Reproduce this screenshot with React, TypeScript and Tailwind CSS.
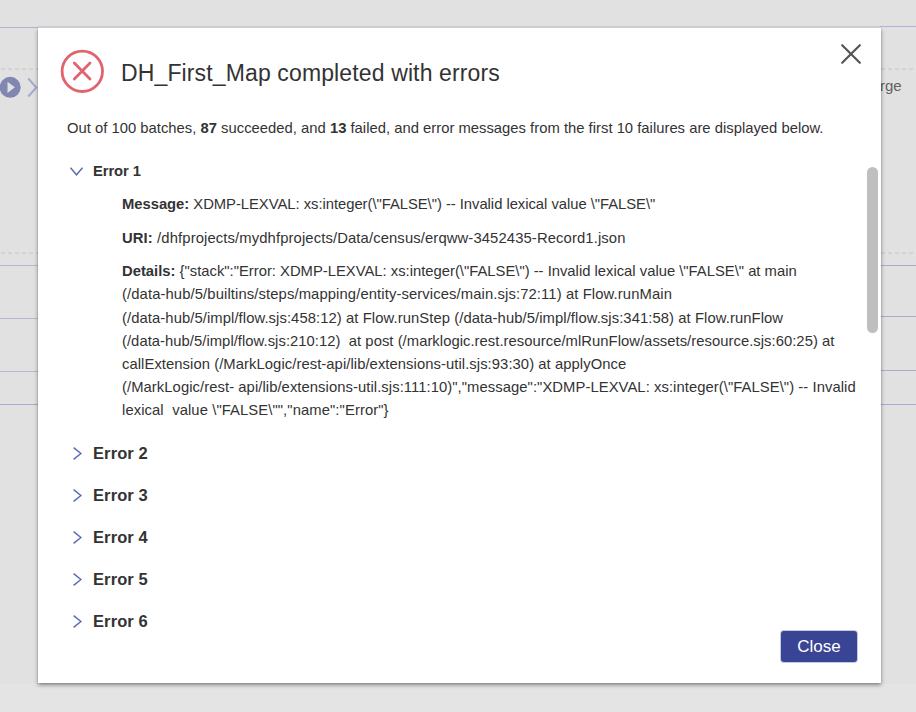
import type { ReactNode } from "react";

function Line({ children, className = "" }: { children: ReactNode; className?: string }) {
  return <div className={`h-[23.15px] whitespace-pre leading-[23.15px] ${className}`}>{children}</div>;
}

function Dashes() {
  return <div className="h-[2px] bg-[repeating-linear-gradient(90deg,transparent_0_1px,#d2d2d2_1px_5px,transparent_5px_7px)]" />;
}

function PlayIcon() {
  return (
    <svg className="absolute top-[76px] left-0" width="38" height="22" viewBox="0 0 38 22" fill="none">
      <circle cx="10.2" cy="11.3" r="10.5" fill="#8287b2" />
      <path d="M7.5 5.8L14.8 11.3L7.5 17Z" fill="#e1e1e1" />
      <path d="M28.3 2.5L36.3 11.5L28.3 20.5" stroke="#a6a9cf" strokeWidth="2" />
    </svg>
  );
}

function Chevron({ open = false }: { open?: boolean }) {
  return open ? (
    <svg className="ml-[3px] shrink-0" width="13" height="9" viewBox="0 0 13 9" fill="none">
      <path d="M0.5 0.7L6.5 7.8L12.5 0.7" stroke="#5b68b4" strokeWidth="1.4" />
    </svg>
  ) : (
    <svg className="ml-[6px] shrink-0" width="9" height="13" viewBox="0 0 9 13" fill="none">
      <path d="M0.6 0.6L7.9 6.5L0.6 12.4" stroke="#5b68b4" strokeWidth="1.4" />
    </svg>
  );
}

export default function App() {
  return (
    <div className="relative h-[712px] w-[916px] overflow-hidden bg-[#e4e4e4] font-['Liberation_Sans',Arial,sans-serif] text-[#333333]">
      <div className="flex h-[684px] bg-[#e1e1e1]">
        <div className="relative w-[38px]">
          <div className="h-[28px] border-b border-[#b0b3d0]" />
          <div className="h-[40px]" />
          <Dashes />
          <div className="h-[182px]" />
          <Dashes />
          <div className="h-[12px] border-b border-[#b5b8d3]" />
          <div className="h-[53px] border-b border-[#b5b8d3]" />
          <div className="h-[53px] border-b border-[#b5b8d3]" />
          <div className="h-[33px] border-b border-[#a9acd0]" />
          <PlayIcon />
        </div>
        <div className="h-[27px] flex-1 border-b border-[#d0d0da]" />
        <div className="relative w-[36px]">
          <div className="h-[27px] border-b border-[#b0b3d3]" />
          <div className="h-[41px]" />
          <Dashes />
          <div className="h-[182px] pt-[5px] text-[15px] leading-[22px] text-[#626262]">rge</div>
          <Dashes />
          <div className="h-[12px] border-b border-[#a9acd0]" />
          <div className="h-[51px] border-b border-[#a9acd0]" />
          <div className="h-[54px] border-b border-[#a9acd0]" />
          <div className="h-[34px] border-b border-[#a9acd0]" />
        </div>
      </div>

      <div className="absolute top-[28px] left-[38px] h-[655px] w-[843px] bg-white shadow-[0_0_0_0.5px_rgba(0,0,0,0.08),0_2px_4px_0_rgba(0,0,0,0.42)]">
        <header className="flex h-[88px] items-start">
          <svg className="mt-[21px] ml-[22px] shrink-0" width="45" height="45" viewBox="0 0 45 45" fill="none" stroke="#e0646d">
            <circle cx="22.3" cy="22.3" r="20.2" strokeWidth="2.8" />
            <path d="M14.3 14.1L30 30.1M30 14.1L14.3 30.1" strokeWidth="2.8" strokeLinecap="round" />
          </svg>
          <h1 className="mt-[30px] ml-[16px] flex-1 whitespace-nowrap text-[23px] leading-[30px] tracking-[0.13px]">DH_First_Map completed with errors</h1>
          <svg className="mt-[15px] mr-[19px]" width="22" height="22" viewBox="0 0 22 22" stroke="#555555" strokeWidth="2.2" strokeLinecap="round">
            <path d="M2.2 2.2L19.8 19.8M19.8 2.2L2.2 19.8" />
          </svg>
        </header>

        <p className="ml-[29px] h-[24px] whitespace-nowrap text-[14.8px] leading-[24px] tracking-[0.012px]">
          Out of 100 batches, <b>87</b> succeeded, and <b>13</b> failed, and error messages from the first 10 failures are displayed below.
        </p>

        <div className="flex h-[491px] pt-[19px]">
          <div className="w-[829px] pl-[29px]">
            <div className="flex h-[24px] items-center">
              <Chevron open />
              <span className="ml-[10px] text-[14.8px] font-bold tracking-[-0.1px]">Error 1</span>
            </div>
            <div className="pt-[10px] pl-[55px] text-[14.8px]">
              <Line className="mb-[10.5px] tracking-[-0.03px]"><b>Message:</b> {'XDMP-LEXVAL: xs:integer(\\"FALSE\\") -- Invalid lexical value \\"FALSE\\"'}</Line>
              <Line className="mb-[10.5px] tracking-[0.12px]"><b>URI:</b> /dhfprojects/mydhfprojects/Data/census/erqww-3452435-Record1.json</Line>
              <Line><b>Details:</b> {'{"stack":"Error: XDMP-LEXVAL: xs:integer(\\"FALSE\\") -- Invalid lexical value \\"FALSE\\" at main'}</Line>
              <Line className="tracking-[0.11px]">(/data-hub/5/builtins/steps/mapping/entity-services/main.sjs:72:11) at Flow.runMain</Line>
              <Line className="tracking-[0.08px]">(/data-hub/5/impl/flow.sjs:458:12) at Flow.runStep (/data-hub/5/impl/flow.sjs:341:58) at Flow.runFlow</Line>
              <Line className="tracking-[0.04px]">{"(/data-hub/5/impl/flow.sjs:210:12)  at post (/marklogic.rest.resource/mlRunFlow/assets/resource.sjs:60:25) at"}</Line>
              <Line className="tracking-[0.065px]">callExtension (/MarkLogic/rest-api/lib/extensions-util.sjs:93:30) at applyOnce</Line>
              <Line className="tracking-[0.066px]">{'(/MarkLogic/rest- api/lib/extensions-util.sjs:111:10)","message":"XDMP-LEXVAL: xs:integer(\\"FALSE\\") -- Invalid'}</Line>
              <Line className="tracking-[0.09px]">{'lexical  value \\"FALSE\\"","name":"Error"}'}</Line>
            </div>
            <div className="pt-[10px]">
              {[2, 3, 4, 5, 6].map((n) => (
                <div key={n} className="flex h-[42.1px] items-center">
                  <Chevron />
                  <span className="ml-[11px] text-[16.5px] font-bold tracking-[0.1px]">Error {n}</span>
                </div>
              ))}
            </div>
          </div>
          <div className="mt-[8px] h-[166px] w-[11px] rounded-full bg-[#bfbfbf]" />
        </div>

        <footer className="flex justify-end pr-[24px]">
          <button className="h-[31px] w-[76px] rounded-[3px] bg-[#394494] text-[17px] leading-[32px] text-white shadow-[0_0_0_1px_#c5c8df]">Close</button>
        </footer>
      </div>
    </div>
  );
}
